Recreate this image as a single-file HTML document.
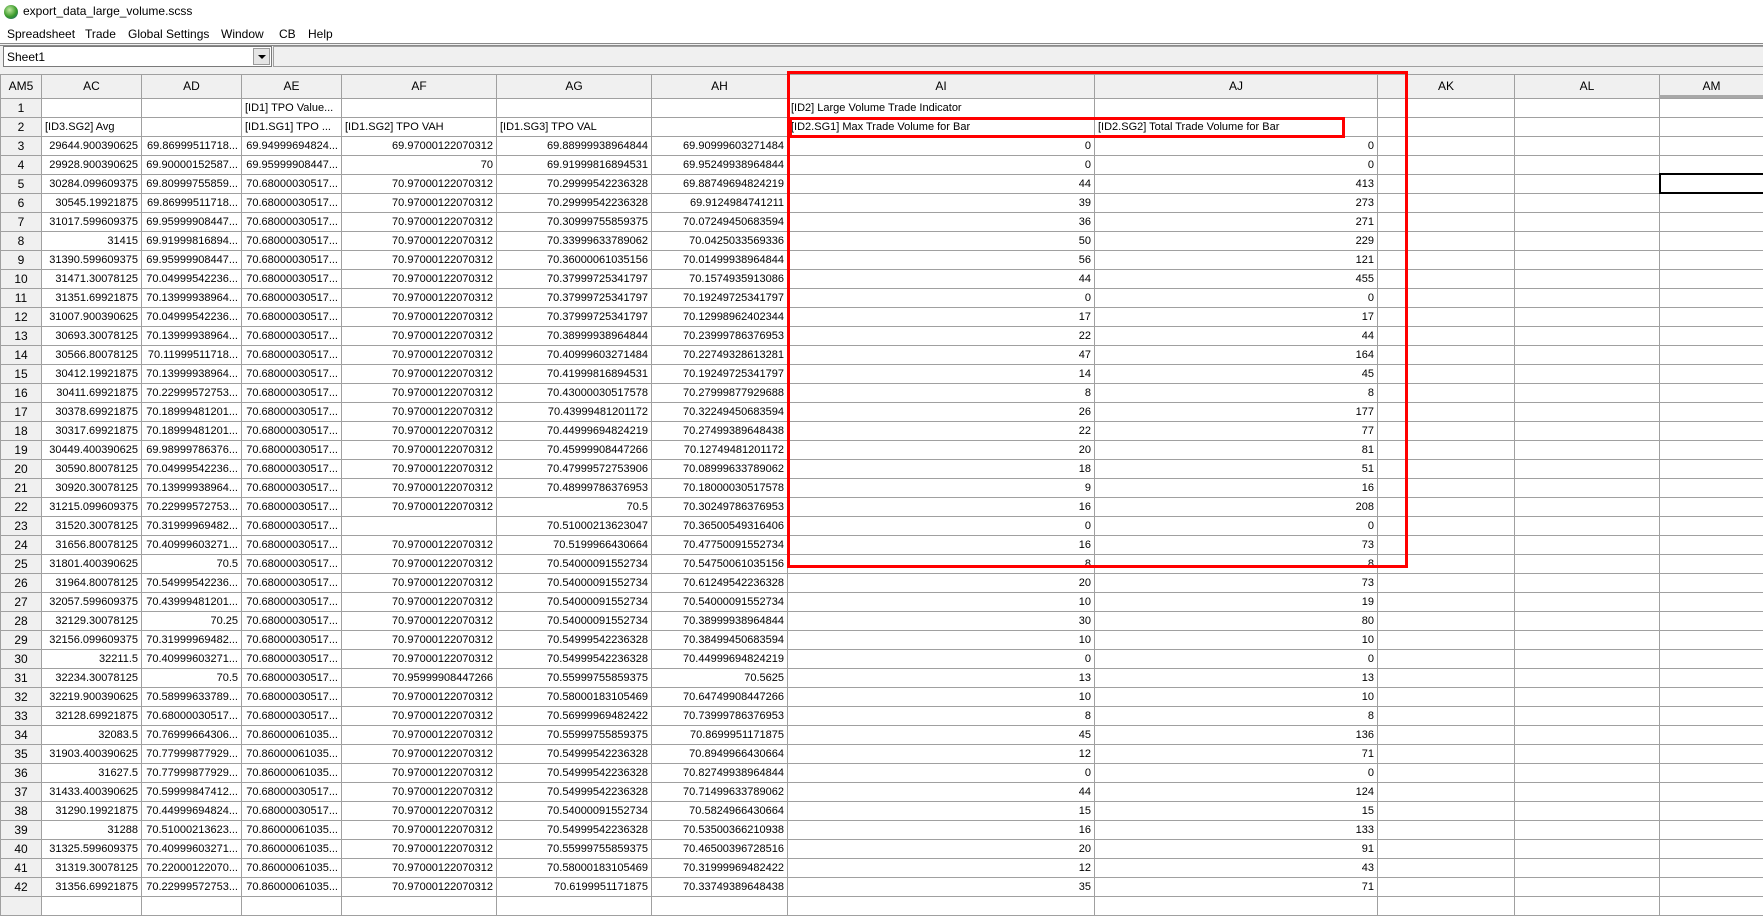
<!DOCTYPE html>
<html><head><meta charset="utf-8">
<style>
*{box-sizing:border-box;margin:0;padding:0}
body{width:1763px;height:901px;overflow:hidden;background:#fff;font-family:"Liberation Sans",sans-serif;font-size:12px;color:#000;position:relative}
.title{position:absolute;left:0;top:0;width:1763px;height:24px;background:#fff}
.title span{position:absolute;left:23px;top:4px;font-size:12px}
.icon{position:absolute;left:4px;top:5px;width:14px;height:14px;border-radius:50%;background:radial-gradient(circle at 40% 35%,#bfe8a0,#3a9a2a 55%,#1a5a8a)}
.menu{position:absolute;top:24px;left:0;height:19px;width:1763px}
.menu span{position:absolute;top:3px;font-size:12px}
.tb{position:absolute;top:43px;left:0;width:1763px;height:31px;background:#f0f0f0;border-top:3px double #8a8a8a}
.combo{position:absolute;left:3px;top:46px;width:269px;height:21px;background:#fff;border:1px solid #7a7a7a}
.combo span{position:absolute;left:3px;top:3px}
.dd{position:absolute;right:1px;top:1px;width:17px;height:17px;background:#e5e5e5;border:1px solid #9a9a9a}
.dd:after{content:"";position:absolute;left:4px;top:6px;border-left:4px solid transparent;border-right:4px solid transparent;border-top:4px solid #000}
.fx{position:absolute;left:273px;top:46px;width:1490px;height:21px;border:1px solid #a0a0a0;border-right:none;background:#f0f0f0}
table{position:absolute;left:0;top:74px;border-collapse:collapse;table-layout:fixed;font-size:11px;width:1763px}
td{border:1px solid #a0a0a0;height:19px;padding:0 3px;white-space:nowrap;overflow:hidden;text-align:right;line-height:17px}
tr.h td{height:24px;background:#f0f0f0;text-align:center;font-size:12px}
td.r{background:#f0f0f0;text-align:center;font-size:12px}
td.l{text-align:left}
.red{position:absolute;border:3px solid #ff0000}
.sel{position:absolute;left:1659px;top:173px;width:104px;height:21px;border:2px solid #000;border-right:none}
.amu{position:absolute;left:1659px;top:95px;width:104px;height:3px;background:#a8a8a8}
</style></head><body>
<div class="title"><div class="icon"></div><span>export_data_large_volume.scss</span></div>
<div class="menu"><span style="left:7px">Spreadsheet</span><span style="left:85px">Trade</span><span style="left:128px">Global Settings</span><span style="left:221px">Window</span><span style="left:279px">CB</span><span style="left:308px">Help</span></div>
<div class="tb"></div>
<div class="combo"><span>Sheet1</span><div class="dd"></div></div>
<div class="fx"></div>
<table>
<colgroup><col style="width:41px"><col style="width:100px"><col style="width:100px"><col style="width:100px"><col style="width:155px"><col style="width:155px"><col style="width:136px"><col style="width:307px"><col style="width:283px"><col style="width:137px"><col style="width:145px"><col style="width:104px"></colgroup>
<tr class="h"><td>AM5</td><td>AC</td><td>AD</td><td>AE</td><td>AF</td><td>AG</td><td>AH</td><td>AI</td><td>AJ</td><td>AK</td><td>AL</td><td>AM</td></tr>
<tr><td class="r">1</td><td></td><td></td><td class="l">[ID1] TPO Value...</td><td></td><td></td><td></td><td class="l">[ID2] Large Volume Trade Indicator</td><td></td><td></td><td></td><td></td></tr>
<tr><td class="r">2</td><td class="l">[ID3.SG2] Avg</td><td></td><td class="l">[ID1.SG1] TPO ...</td><td class="l">[ID1.SG2] TPO VAH</td><td class="l">[ID1.SG3] TPO VAL</td><td></td><td class="l">[ID2.SG1] Max Trade Volume for Bar</td><td class="l">[ID2.SG2] Total Trade Volume for Bar</td><td></td><td></td><td></td></tr>
<tr><td class="r">3</td><td>29644.900390625</td><td>69.86999511718...</td><td>69.94999694824...</td><td>69.97000122070312</td><td>69.88999938964844</td><td>69.90999603271484</td><td>0</td><td>0</td><td></td><td></td><td></td></tr>
<tr><td class="r">4</td><td>29928.900390625</td><td>69.90000152587...</td><td>69.95999908447...</td><td>70</td><td>69.91999816894531</td><td>69.95249938964844</td><td>0</td><td>0</td><td></td><td></td><td></td></tr>
<tr><td class="r">5</td><td>30284.099609375</td><td>69.80999755859...</td><td>70.68000030517...</td><td>70.97000122070312</td><td>70.29999542236328</td><td>69.88749694824219</td><td>44</td><td>413</td><td></td><td></td><td></td></tr>
<tr><td class="r">6</td><td>30545.19921875</td><td>69.86999511718...</td><td>70.68000030517...</td><td>70.97000122070312</td><td>70.29999542236328</td><td>69.9124984741211</td><td>39</td><td>273</td><td></td><td></td><td></td></tr>
<tr><td class="r">7</td><td>31017.599609375</td><td>69.95999908447...</td><td>70.68000030517...</td><td>70.97000122070312</td><td>70.30999755859375</td><td>70.07249450683594</td><td>36</td><td>271</td><td></td><td></td><td></td></tr>
<tr><td class="r">8</td><td>31415</td><td>69.91999816894...</td><td>70.68000030517...</td><td>70.97000122070312</td><td>70.33999633789062</td><td>70.0425033569336</td><td>50</td><td>229</td><td></td><td></td><td></td></tr>
<tr><td class="r">9</td><td>31390.599609375</td><td>69.95999908447...</td><td>70.68000030517...</td><td>70.97000122070312</td><td>70.36000061035156</td><td>70.01499938964844</td><td>56</td><td>121</td><td></td><td></td><td></td></tr>
<tr><td class="r">10</td><td>31471.30078125</td><td>70.04999542236...</td><td>70.68000030517...</td><td>70.97000122070312</td><td>70.37999725341797</td><td>70.1574935913086</td><td>44</td><td>455</td><td></td><td></td><td></td></tr>
<tr><td class="r">11</td><td>31351.69921875</td><td>70.13999938964...</td><td>70.68000030517...</td><td>70.97000122070312</td><td>70.37999725341797</td><td>70.19249725341797</td><td>0</td><td>0</td><td></td><td></td><td></td></tr>
<tr><td class="r">12</td><td>31007.900390625</td><td>70.04999542236...</td><td>70.68000030517...</td><td>70.97000122070312</td><td>70.37999725341797</td><td>70.12998962402344</td><td>17</td><td>17</td><td></td><td></td><td></td></tr>
<tr><td class="r">13</td><td>30693.30078125</td><td>70.13999938964...</td><td>70.68000030517...</td><td>70.97000122070312</td><td>70.38999938964844</td><td>70.23999786376953</td><td>22</td><td>44</td><td></td><td></td><td></td></tr>
<tr><td class="r">14</td><td>30566.80078125</td><td>70.11999511718...</td><td>70.68000030517...</td><td>70.97000122070312</td><td>70.40999603271484</td><td>70.22749328613281</td><td>47</td><td>164</td><td></td><td></td><td></td></tr>
<tr><td class="r">15</td><td>30412.19921875</td><td>70.13999938964...</td><td>70.68000030517...</td><td>70.97000122070312</td><td>70.41999816894531</td><td>70.19249725341797</td><td>14</td><td>45</td><td></td><td></td><td></td></tr>
<tr><td class="r">16</td><td>30411.69921875</td><td>70.22999572753...</td><td>70.68000030517...</td><td>70.97000122070312</td><td>70.43000030517578</td><td>70.27999877929688</td><td>8</td><td>8</td><td></td><td></td><td></td></tr>
<tr><td class="r">17</td><td>30378.69921875</td><td>70.18999481201...</td><td>70.68000030517...</td><td>70.97000122070312</td><td>70.43999481201172</td><td>70.32249450683594</td><td>26</td><td>177</td><td></td><td></td><td></td></tr>
<tr><td class="r">18</td><td>30317.69921875</td><td>70.18999481201...</td><td>70.68000030517...</td><td>70.97000122070312</td><td>70.44999694824219</td><td>70.27499389648438</td><td>22</td><td>77</td><td></td><td></td><td></td></tr>
<tr><td class="r">19</td><td>30449.400390625</td><td>69.98999786376...</td><td>70.68000030517...</td><td>70.97000122070312</td><td>70.45999908447266</td><td>70.12749481201172</td><td>20</td><td>81</td><td></td><td></td><td></td></tr>
<tr><td class="r">20</td><td>30590.80078125</td><td>70.04999542236...</td><td>70.68000030517...</td><td>70.97000122070312</td><td>70.47999572753906</td><td>70.08999633789062</td><td>18</td><td>51</td><td></td><td></td><td></td></tr>
<tr><td class="r">21</td><td>30920.30078125</td><td>70.13999938964...</td><td>70.68000030517...</td><td>70.97000122070312</td><td>70.48999786376953</td><td>70.18000030517578</td><td>9</td><td>16</td><td></td><td></td><td></td></tr>
<tr><td class="r">22</td><td>31215.099609375</td><td>70.22999572753...</td><td>70.68000030517...</td><td>70.97000122070312</td><td>70.5</td><td>70.30249786376953</td><td>16</td><td>208</td><td></td><td></td><td></td></tr>
<tr><td class="r">23</td><td>31520.30078125</td><td>70.31999969482...</td><td>70.68000030517...</td><td></td><td>70.51000213623047</td><td>70.36500549316406</td><td>0</td><td>0</td><td></td><td></td><td></td></tr>
<tr><td class="r">24</td><td>31656.80078125</td><td>70.40999603271...</td><td>70.68000030517...</td><td>70.97000122070312</td><td>70.5199966430664</td><td>70.47750091552734</td><td>16</td><td>73</td><td></td><td></td><td></td></tr>
<tr><td class="r">25</td><td>31801.400390625</td><td>70.5</td><td>70.68000030517...</td><td>70.97000122070312</td><td>70.54000091552734</td><td>70.54750061035156</td><td>8</td><td>8</td><td></td><td></td><td></td></tr>
<tr><td class="r">26</td><td>31964.80078125</td><td>70.54999542236...</td><td>70.68000030517...</td><td>70.97000122070312</td><td>70.54000091552734</td><td>70.61249542236328</td><td>20</td><td>73</td><td></td><td></td><td></td></tr>
<tr><td class="r">27</td><td>32057.599609375</td><td>70.43999481201...</td><td>70.68000030517...</td><td>70.97000122070312</td><td>70.54000091552734</td><td>70.54000091552734</td><td>10</td><td>19</td><td></td><td></td><td></td></tr>
<tr><td class="r">28</td><td>32129.30078125</td><td>70.25</td><td>70.68000030517...</td><td>70.97000122070312</td><td>70.54000091552734</td><td>70.38999938964844</td><td>30</td><td>80</td><td></td><td></td><td></td></tr>
<tr><td class="r">29</td><td>32156.099609375</td><td>70.31999969482...</td><td>70.68000030517...</td><td>70.97000122070312</td><td>70.54999542236328</td><td>70.38499450683594</td><td>10</td><td>10</td><td></td><td></td><td></td></tr>
<tr><td class="r">30</td><td>32211.5</td><td>70.40999603271...</td><td>70.68000030517...</td><td>70.97000122070312</td><td>70.54999542236328</td><td>70.44999694824219</td><td>0</td><td>0</td><td></td><td></td><td></td></tr>
<tr><td class="r">31</td><td>32234.30078125</td><td>70.5</td><td>70.68000030517...</td><td>70.95999908447266</td><td>70.55999755859375</td><td>70.5625</td><td>13</td><td>13</td><td></td><td></td><td></td></tr>
<tr><td class="r">32</td><td>32219.900390625</td><td>70.58999633789...</td><td>70.68000030517...</td><td>70.97000122070312</td><td>70.58000183105469</td><td>70.64749908447266</td><td>10</td><td>10</td><td></td><td></td><td></td></tr>
<tr><td class="r">33</td><td>32128.69921875</td><td>70.68000030517...</td><td>70.68000030517...</td><td>70.97000122070312</td><td>70.56999969482422</td><td>70.73999786376953</td><td>8</td><td>8</td><td></td><td></td><td></td></tr>
<tr><td class="r">34</td><td>32083.5</td><td>70.76999664306...</td><td>70.86000061035...</td><td>70.97000122070312</td><td>70.55999755859375</td><td>70.8699951171875</td><td>45</td><td>136</td><td></td><td></td><td></td></tr>
<tr><td class="r">35</td><td>31903.400390625</td><td>70.77999877929...</td><td>70.86000061035...</td><td>70.97000122070312</td><td>70.54999542236328</td><td>70.8949966430664</td><td>12</td><td>71</td><td></td><td></td><td></td></tr>
<tr><td class="r">36</td><td>31627.5</td><td>70.77999877929...</td><td>70.86000061035...</td><td>70.97000122070312</td><td>70.54999542236328</td><td>70.82749938964844</td><td>0</td><td>0</td><td></td><td></td><td></td></tr>
<tr><td class="r">37</td><td>31433.400390625</td><td>70.59999847412...</td><td>70.68000030517...</td><td>70.97000122070312</td><td>70.54999542236328</td><td>70.71499633789062</td><td>44</td><td>124</td><td></td><td></td><td></td></tr>
<tr><td class="r">38</td><td>31290.19921875</td><td>70.44999694824...</td><td>70.68000030517...</td><td>70.97000122070312</td><td>70.54000091552734</td><td>70.5824966430664</td><td>15</td><td>15</td><td></td><td></td><td></td></tr>
<tr><td class="r">39</td><td>31288</td><td>70.51000213623...</td><td>70.86000061035...</td><td>70.97000122070312</td><td>70.54999542236328</td><td>70.53500366210938</td><td>16</td><td>133</td><td></td><td></td><td></td></tr>
<tr><td class="r">40</td><td>31325.599609375</td><td>70.40999603271...</td><td>70.86000061035...</td><td>70.97000122070312</td><td>70.55999755859375</td><td>70.46500396728516</td><td>20</td><td>91</td><td></td><td></td><td></td></tr>
<tr><td class="r">41</td><td>31319.30078125</td><td>70.22000122070...</td><td>70.86000061035...</td><td>70.97000122070312</td><td>70.58000183105469</td><td>70.31999969482422</td><td>12</td><td>43</td><td></td><td></td><td></td></tr>
<tr><td class="r">42</td><td>31356.69921875</td><td>70.22999572753...</td><td>70.86000061035...</td><td>70.97000122070312</td><td>70.6199951171875</td><td>70.33749389648438</td><td>35</td><td>71</td><td></td><td></td><td></td></tr>
<tr><td class="r"></td><td></td><td></td><td></td><td></td><td></td><td></td><td></td><td></td><td></td><td></td><td></td></tr>
</table>
<div class="amu"></div>
<div class="sel"></div>
<div class="red" style="left:787px;top:71px;width:621px;height:497px"></div>
<div class="red" style="left:789px;top:117px;width:556px;height:21px"></div>
</body></html>
